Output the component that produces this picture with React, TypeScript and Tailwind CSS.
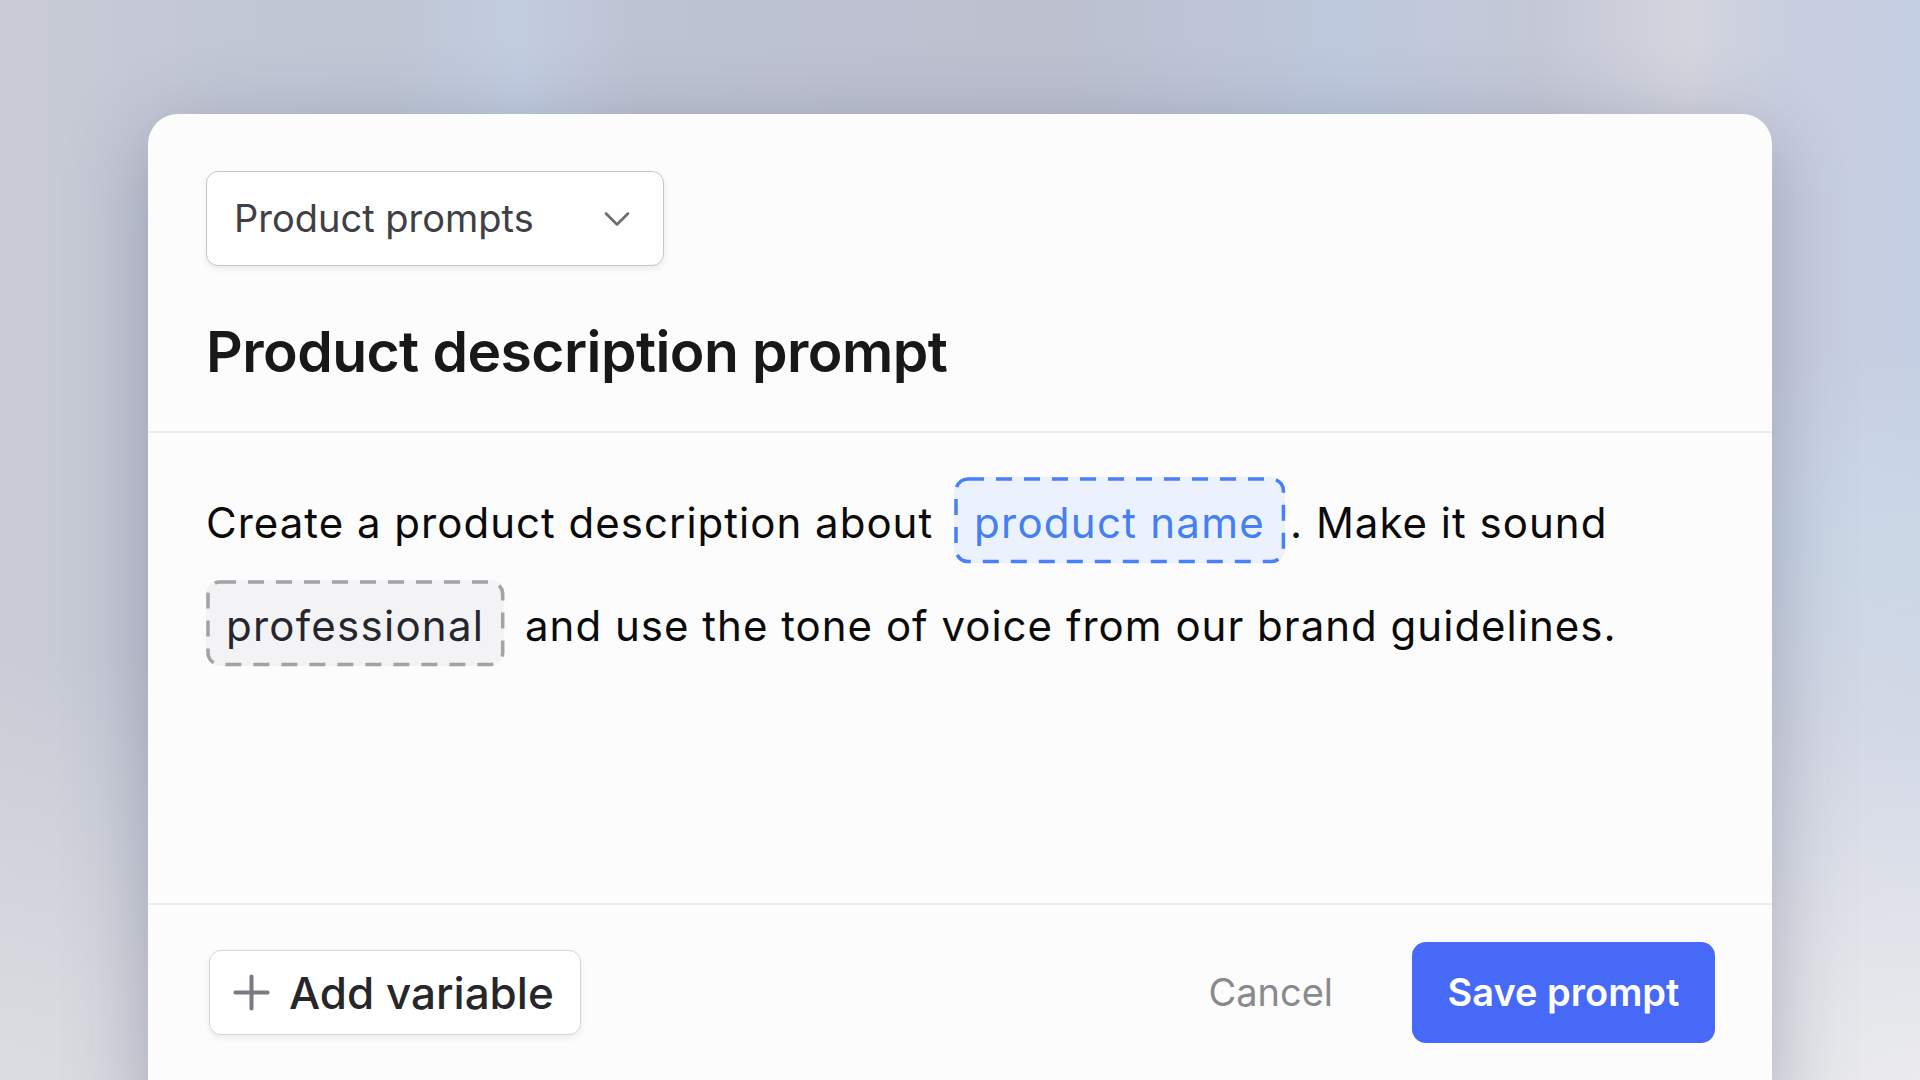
import { ChevronDown, Plus } from 'lucide-react';
import type { ReactNode } from 'react';

// dashed pill used for the prompt variables
function VariableChip({ children, tone, className }: { children: ReactNode; tone: 'blue' | 'gray'; className?: string }) {
    const blue = tone === 'blue';
    return (
        <span
            className={`relative inline-block align-baseline rounded-[14px] px-[20px] pt-[22px] pb-[16px] leading-[48px] tracking-[0.03em] ${
                blue ? 'bg-[#ebf2fe] text-[#4480f2]' : 'bg-[#f3f3f5] text-[#26262e]'
            } ${className ?? ''}`}
        >
            {children}
            <svg className="pointer-events-none absolute inset-[1.75px] h-[calc(100%-3.5px)] w-[calc(100%-3.5px)] overflow-visible">
                <rect
                    x="0"
                    y="0"
                    width="100%"
                    height="100%"
                    rx="12"
                    fill="none"
                    stroke={blue ? '#4a80f5' : '#a3a3a6'}
                    strokeWidth="3.5"
                    strokeDasharray="16 12"
                />
            </svg>
        </span>
    );
}

export default function App() {
    return (
        <div className="h-screen w-full overflow-hidden bg-[radial-gradient(ellipse_at_100%_100%,#ebebed_0%,rgba(235,235,237,0)_35%),radial-gradient(ellipse_at_0%_100%,#dcdde2_0%,rgba(220,221,226,0)_28%),radial-gradient(ellipse_at_100%_50%,#cbd8e6_0%,rgba(203,216,230,0)_25%),linear-gradient(90deg,#c9ccd6_0%,#c2c7d5_12%,#bfc6d4_20%,#c2cde0_27%,#bec3d3_33%,#bcc0cf_55%,#bec9dd_70%,#c4c8d6_80%,#d3d5de_88%,#c9cfe0_93%,#c5cfe3_100%)] px-[148px] pt-[114px] font-[Inter,sans-serif]">
            <div className="flex h-[1000px] flex-col rounded-[30px] bg-[#fcfcfc] shadow-[0_20px_80px_rgba(60,70,100,0.35)]">
                {/* Header */}
                <div className="border-b-2 border-[#ebebeb] px-[58px] pt-[57px] pb-[46px]">
                    <button className="flex h-[95px] w-[458px] items-center justify-between rounded-[12px] border border-[#c6c6ca] bg-[#fefefe] pl-[27px] pr-[24px] text-[38px] text-[#3f3f46] shadow-[0_3px_6px_rgba(0,0,0,0.07)]">
                        <span>Product prompts</span>
                        <ChevronDown className="h-[44px] w-[44px] text-[#6b6b70]" strokeWidth={1.4} />
                    </button>
                    <h1 className="mt-[52px] text-[57px] font-semibold leading-[67px] tracking-[-0.01em] text-[#18181b]">
                        Product description prompt
                    </h1>
                </div>

                {/* Prompt body */}
                <div className="h-[472px] border-b-2 border-[#ebebeb] px-[58px] pt-[38px] text-[42px] leading-[103px] tracking-[0.024em] text-[#0b0b0b]">
                    <p>
                        Create a product description about{' '}
                        <VariableChip tone="blue" className="ml-[8px] mr-[5px]">product name</VariableChip>. Make it sound
                        <br />
                        <VariableChip tone="gray" className="mr-[8px]">professional</VariableChip> and use the tone of voice from our brand guidelines.
                    </p>
                </div>

                {/* Footer */}
                <div className="flex items-center justify-between pl-[61px] pr-[57px] pt-[37px]">
                    <button className="flex h-[85px] w-[372px] items-center gap-[10px] rounded-[12px] border border-[#d6d6da] bg-white pl-[14px] text-[44px] font-medium text-[#27272a] shadow-[0_3px_6px_rgba(0,0,0,0.07)]">
                        <Plus className="h-[55px] w-[55px] text-[#7a7a80]" strokeWidth={1.75} />
                        <span>Add variable</span>
                    </button>
                    <div className="flex items-center gap-[79px]">
                        <button className="text-[38px] text-[#8a8a8e]">Cancel</button>
                        <button className="flex h-[101px] w-[303px] items-center justify-center rounded-[14px] bg-[#4669f8] text-[38px] font-semibold text-white">
                            Save prompt
                        </button>
                    </div>
                </div>
            </div>
        </div>
    );
}
